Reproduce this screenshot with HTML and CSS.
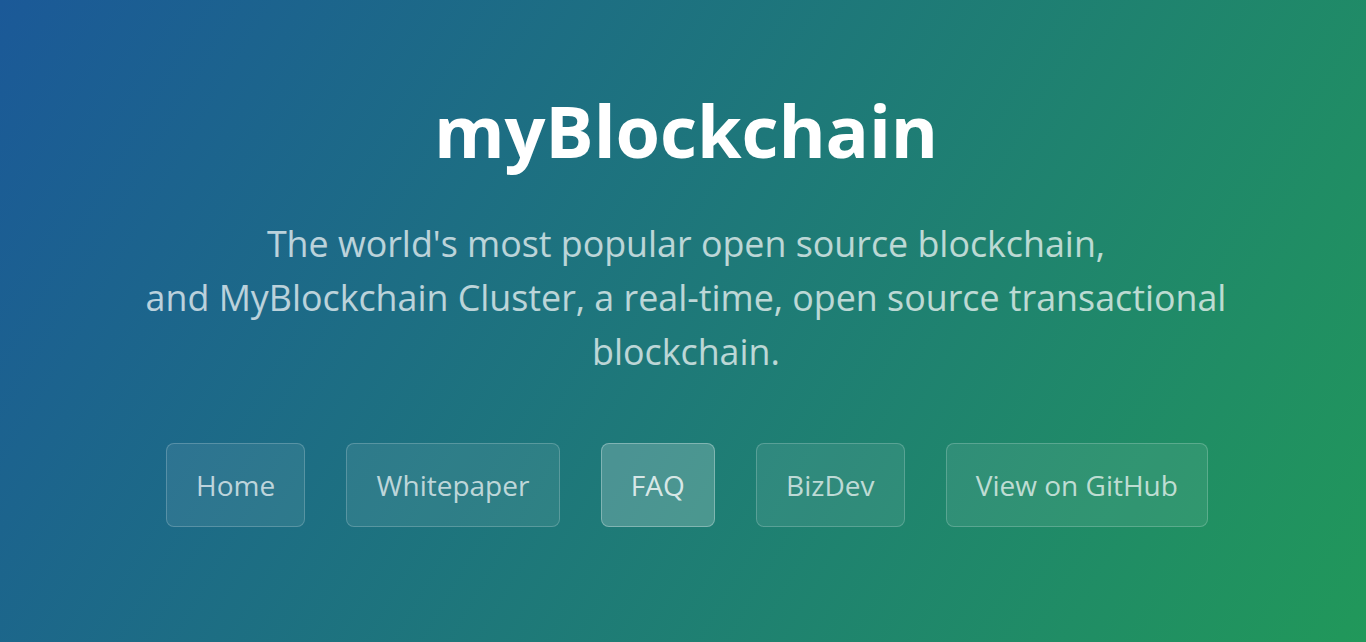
FILE: index.html
```
<!DOCTYPE html>
<html lang="en">
<head>
<meta charset="utf-8">
<title>myBlockchain</title>
<link rel="stylesheet" href="styles.css">
</head>
<body>
<header class="page-header">
  <h1 class="project-name">myBlockchain</h1>
  <p class="project-tagline">The world's most popular open source blockchain,<br>and MyBlockchain Cluster, a real-time, open source transactional<br>blockchain.</p>
  <nav class="buttons">
    <a class="btn" href="#">Home</a>
    <a class="btn" href="#">Whitepaper</a>
    <a class="btn btn-hover" href="#">FAQ</a>
    <a class="btn" href="#">BizDev</a>
    <a class="btn" href="#">View on GitHub</a>
  </nav>
</header>
</body>
</html>
```
FILE: styles.css
```
html, body {
  margin: 0;
  padding: 0;
  height: 100%;
}
body {
  font-family: "Open Sans", "Liberation Sans", sans-serif;
  overflow: hidden;
}
.page-header {
  box-sizing: border-box;
  min-height: 100vh;
  padding: 87px 0 0 6px;
  color: #fff;
  text-align: center;
  background-color: #1f9659;
  background-image: linear-gradient(120deg, #1b5998, #21985a);
}
.project-name {
  margin: 0;
  font-size: 72px;
  font-weight: 700;
  line-height: 86px;
  letter-spacing: -0.1px;
}
.project-tagline {
  margin: 43px 0 0;
  font-size: 35.8px;
  font-weight: 400;
  line-height: 54px;
  opacity: 0.7;
}
.buttons {
  display: flex;
  justify-content: center;
  gap: 41px;
  margin-top: 65px;
  padding-left: 2px;
}
.btn {
  display: inline-block;
  padding: 19px 29.2px;
  font-size: 28px;
  line-height: 44px;
  color: rgba(255, 255, 255, 0.7);
  text-decoration: none;
  background-color: rgba(255, 255, 255, 0.08);
  border: 1px solid rgba(255, 255, 255, 0.2);
  border-radius: 8px;
}
.btn-hover {
  color: rgba(255, 255, 255, 0.8);
  background-color: rgba(255, 255, 255, 0.2);
  border-color: rgba(255, 255, 255, 0.3);
}
```
